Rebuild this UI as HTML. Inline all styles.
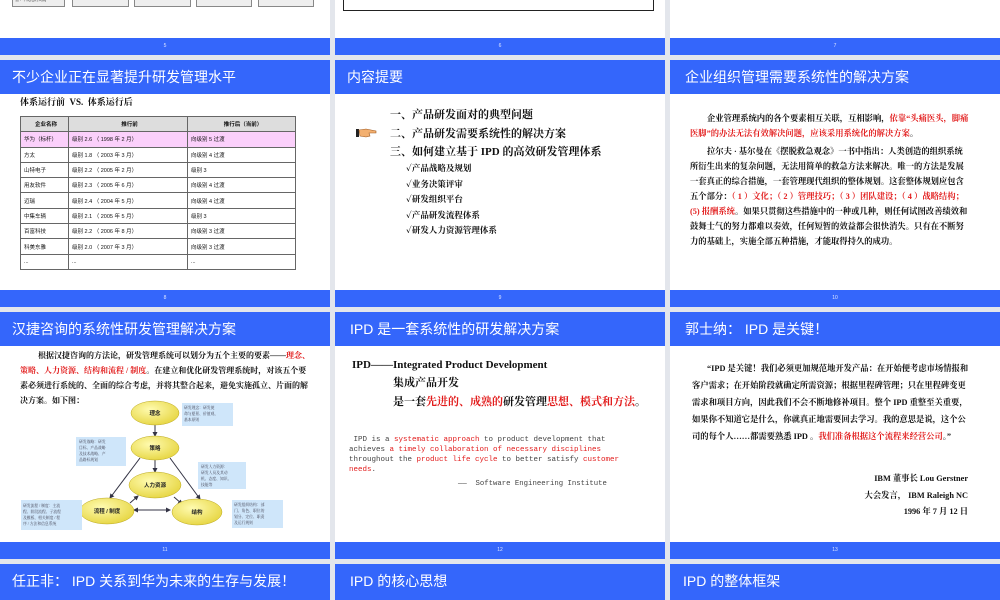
<!DOCTYPE html>
<html><head><meta charset="utf-8"><style>
*{margin:0;padding:0;box-sizing:border-box}
body{width:1000px;height:600px;background:#e3e6ec;position:relative;overflow:hidden;font-family:"Liberation Serif","Noto Serif CJK SC","Noto Sans CJK SC",serif;color:#111}
.a{position:absolute}
.w{position:absolute;background:#fff}
.b{position:absolute;background:#3466fb}
.h{position:absolute;background:#3466fb;color:#fff;font-family:"Liberation Sans","Noto Sans CJK SC",sans-serif;font-size:14px;line-height:34px;padding-left:12px;white-space:nowrap}
.n{color:#dfe6ff;font-family:"Liberation Sans",sans-serif;font-size:5px;text-align:center;line-height:16px}
.r{color:#e21b1b}
table{border-collapse:collapse;font-family:"Liberation Sans","Noto Sans CJK SC",sans-serif;font-size:5.5px}
td{border:1px solid #666;height:15.3px;padding-left:3px}
.p{font-size:8.6px;line-height:15px;font-family:"Liberation Serif","Noto Serif CJK SC",serif;font-weight:bold}
</style></head><body>
<!-- Row 1 -->
<div class="w" style="left:0;top:0;width:330px;height:38px"></div>
<div class="w" style="left:335px;top:0;width:330px;height:38px"></div>
<div class="w" style="left:670px;top:0;width:330px;height:38px"></div>
<div class="a" style="left:12px;top:-6px;width:53px;height:13px;border:1px solid #888;background:#eee;font-size:4px;line-height:5px;padding:2px">验 / 不规范的实践</div>
<div class="a" style="left:72px;top:-6px;width:57px;height:13px;border:1px solid #888;background:#eee"></div>
<div class="a" style="left:134px;top:-6px;width:57px;height:13px;border:1px solid #888;background:#eee"></div>
<div class="a" style="left:196px;top:-6px;width:56px;height:13px;border:1px solid #888;background:#eee"></div>
<div class="a" style="left:258px;top:-6px;width:56px;height:13px;border:1px solid #888;background:#eee"></div>
<div class="a" style="left:343px;top:-4px;width:311px;height:15px;border:1px solid #222;border-top:none"></div>
<div class="b n" style="left:0;top:38px;width:330px;height:17px">5</div>
<div class="b n" style="left:335px;top:38px;width:330px;height:17px">6</div>
<div class="b n" style="left:670px;top:38px;width:330px;height:17px">7</div>

<div class="h" style="left:0;top:60px;width:330px;height:34px">不少企业正在显著提升研发管理水平</div>
<div class="h" style="left:335px;top:60px;width:330px;height:34px">内容提要</div>
<div class="h" style="left:670px;top:60px;width:330px;height:34px;padding-left:15px">企业组织管理需要系统性的解决方案</div>
<div class="w" style="left:0;top:94px;width:330px;height:196px"></div>
<div class="w" style="left:335px;top:94px;width:330px;height:196px"></div>
<div class="w" style="left:670px;top:94px;width:330px;height:196px"></div>

<div class="a" style="left:20px;top:95px;font-size:9px;font-weight:bold">体系运行前&nbsp; VS.&nbsp; 体系运行后</div>
<table class="a" style="left:20px;top:116px;width:276px">
<tr style="background:#ddd;text-align:center;font-weight:bold"><td style="width:48px;height:14px">企业名称</td><td style="width:119px">推行前</td><td>推行后（当前）</td></tr>
<tr style="background:#fbd0fb"><td>华为（标杆）</td><td>级别 2.6 （ 1998 年 2 月）</td><td>向级别 5 过渡</td></tr>
<tr><td>方太</td><td>级别 1.8 （ 2003 年 3 月）</td><td>向级别 4 过渡</td></tr>
<tr><td>山特电子</td><td>级别 2.2 （ 2005 年 2 月）</td><td>级别 3</td></tr>
<tr><td>用友软件</td><td>级别 2.3 （ 2005 年 6 月）</td><td>向级别 4 过渡</td></tr>
<tr><td>迈瑞</td><td>级别 2.4 （ 2004 年 5 月）</td><td>向级别 4 过渡</td></tr>
<tr><td>中集车辆</td><td>级别 2.1 （ 2005 年 5 月）</td><td>级别 3</td></tr>
<tr><td>百富科技</td><td>级别 2.2 （ 2006 年 8 月）</td><td>向级别 3 过渡</td></tr>
<tr><td>科美东雅</td><td>级别 2.0 （ 2007 年 3 月）</td><td>向级别 3 过渡</td></tr>
<tr><td>...</td><td>...</td><td>...</td></tr>
</table>

<div class="a" style="left:390px;top:106px;font-size:11px;line-height:18.5px;font-weight:bold">一、产品研发面对的典型问题<br>二、产品研发需要系统性的解决方案<br>三、如何建立基于 IPD 的高效研发管理体系</div>
<div class="a" style="left:406px;top:161px;font-size:8.5px;line-height:15.5px;font-weight:bold">✓产品战略及规划<br>✓业务决策评审<br>✓研发组织平台<br>✓产品研发流程体系<br>✓研发人力资源管理体系</div>
<svg class="a" style="left:356px;top:127px" width="22" height="12" viewBox="0 0 22 12"><rect x="0" y="2" width="3" height="8" fill="#222"/><path d="M3 3 L10 2 L20 4 L20 6 L13 6 L14 9 L10 10 L4 9 Z" fill="#f3b070" stroke="#a05a20" stroke-width=".6"/></svg>

<div class="a p" style="left:690px;top:111px;width:280px;font-size:8.3px"><span style="padding-left:17px"></span>企业管理系统内的各个要素相互关联，互相影响，<span class="r">依靠“头痛医头，脚痛医脚”的办法无法有效解决问题，应该采用系统化的解决方案</span>。<div style="height:3px"></div><span style="padding-left:17px"></span>拉尔夫 · 基尔曼在《摆脱救急观念》一书中指出：人类创造的组织系统所衍生出来的复杂问题，无法用简单的救急方法来解决。唯一的方法是发展一套真正的综合措施，一套管理现代组织的整体规划。这套整体规划应包含五个部分：<span class="r">（ 1 ）文化；（ 2 ）管理技巧；（ 3 ）团队建设；（ 4 ）战略结构；(5) 报酬系统</span>。如果只贯彻这些措施中的一种或几种，则任何试图改善绩效和鼓舞士气的努力都难以奏效，任何短暂的效益都会很快消失。只有在不断努力的基础上，实施全部五种措施，才能取得持久的成功。</div>

<div class="b n" style="left:0;top:290px;width:330px;height:17px">8</div>
<div class="b n" style="left:335px;top:290px;width:330px;height:17px">9</div>
<div class="b n" style="left:670px;top:290px;width:330px;height:17px">10</div>

<!-- Row 2 -->
<div class="h" style="left:0;top:312px;width:330px;height:34px">汉捷咨询的系统性研发管理解决方案</div>
<div class="h" style="left:335px;top:312px;width:330px;height:34px;padding-left:15px">IPD 是一套系统性的研发解决方案</div>
<div class="h" style="left:670px;top:312px;width:330px;height:34px;padding-left:15px">郭士纳： IPD 是关键！</div>
<div class="w" style="left:0;top:346px;width:330px;height:196px"></div>
<div class="w" style="left:335px;top:346px;width:330px;height:196px"></div>
<div class="w" style="left:670px;top:346px;width:330px;height:196px"></div>

<div class="a p" style="left:20px;top:348px;width:294px;font-size:8px"><span style="padding-left:18px"></span>根据汉捷咨询的方法论，研发管理系统可以划分为五个主要的要素——<span class="r">理念、策略、人力资源、结构和流程 / 制度</span>。在建立和优化研发管理系统时，对该五个要素必须进行系统的、全面的综合考虑，并将其整合起来，避免实施孤立、片面的解决方案。如下图：</div>
<svg class="a" style="left:0;top:400px" width="330" height="140" viewBox="0 400 330 140">
<defs><radialGradient id="g" cx=".4" cy=".35" r=".7"><stop offset="0" stop-color="#fffbb0"/><stop offset="1" stop-color="#e6d540"/></radialGradient>
<marker id="m" markerWidth="5" markerHeight="5" refX="4" refY="2.5" orient="auto"><path d="M0 0L5 2.5L0 5Z" fill="#334"/></marker></defs>
<g stroke="#334" stroke-width="1" marker-end="url(#m)" fill="none">
<line x1="155" y1="425" x2="155" y2="436"/><line x1="155" y1="460" x2="155" y2="472"/>
<line x1="140" y1="458" x2="110" y2="498"/><line x1="170" y1="458" x2="200" y2="499"/>
<line x1="135" y1="510" x2="170" y2="510"/><line x1="170" y1="510" x2="134" y2="510"/>
<line x1="130" y1="503" x2="138" y2="496"/><line x1="174" y1="497" x2="182" y2="504"/>
</g>
<g fill="url(#g)" stroke="#bba820" stroke-width=".5">
<ellipse cx="155" cy="413" rx="24" ry="12"/><ellipse cx="155" cy="448" rx="24" ry="12"/><ellipse cx="155" cy="485" rx="26" ry="13"/><ellipse cx="107" cy="511" rx="27" ry="13"/><ellipse cx="197" cy="512" rx="25" ry="13"/></g>
<g font-size="5.5" font-weight="bold" text-anchor="middle" fill="#222" font-family="Liberation Sans,Noto Sans CJK SC,sans-serif">
<text x="155" y="415">理念</text><text x="155" y="450">策略</text><text x="155" y="487">人力资源</text><text x="107" y="513">流程 / 制度</text><text x="197" y="514">结构</text></g>
<g fill="#cfe6fa"><rect x="182" y="403" width="51" height="23"/><rect x="76" y="437" width="50" height="29"/><rect x="198" y="462" width="48" height="27"/><rect x="21" y="500" width="61" height="30"/><rect x="232" y="500" width="51" height="28"/></g>
<g font-size="3.8" fill="#445" font-family="Liberation Serif,Noto Serif CJK SC,serif">
<text x="184" y="409">研发理念：研发使</text><text x="184" y="415">命与愿景、价值观、</text><text x="184" y="421">基本原则</text>
<text x="79" y="443">研发战略：研发</text><text x="79" y="449">目标、产品战略</text><text x="79" y="455">及技术战略、产</text><text x="79" y="461">品路标规划</text>
<text x="201" y="468">研发人力资源：</text><text x="201" y="474">研发人员及其动</text><text x="201" y="480">机、态度、知识、</text><text x="201" y="486">技能等</text>
<text x="23" y="507">研发流程 / 制度：主流</text><text x="23" y="513">程、阶段流程、子流程</text><text x="23" y="519">及模板、相关制度 / 程</text><text x="23" y="525">序 / 方法和信息系统</text>
<text x="234" y="506">研发组织结构：部</text><text x="234" y="512">门、角色、职位的</text><text x="234" y="518">划分、定位、职责</text><text x="234" y="524">及运行规则</text></g>
</svg>

<div class="a" style="left:352px;top:357px;font-size:11px;line-height:17px;font-weight:bold">IPD——Integrated Product Development</div>
<div class="a" style="left:393px;top:374px;font-size:11px;line-height:19px;font-weight:bold">集成产品开发<br>是一套<span class="r">先进的、成熟的</span>研发管理<span class="r">思想、模式和方法</span>。</div>
<div class="a" style="left:349px;top:435px;width:282px;font-family:'Liberation Mono',monospace;font-size:7.5px;line-height:10px;color:#444">&nbsp;IPD is a <span class="r">systematic approach</span> to product development that achieves <span class="r">a timely collaboration of necessary disciplines</span> throughout the <span class="r">product life cycle</span> to better satisfy <span class="r">customer needs</span>.</div>
<div class="a" style="left:458px;top:480px;font-family:'Liberation Mono',monospace;font-size:7.3px;color:#444">——&nbsp; Software Engineering Institute</div>

<div class="a p" style="left:692px;top:360px;width:278px;font-size:8.3px;line-height:17px"><span style="padding-left:15px"></span>“IPD 是关键！我们必须更加规范地开发产品：在开始便考虑市场情报和客户需求；在开始阶段就确定所需资源；根据里程碑管理；只在里程碑变更需求和项目方向，因此我们不会不断地修补项目。整个 IPD 重整至关重要，如果你不知道它是什么，你就真正地需要回去学习。我的意思是说，这个公司的每个人……都需要熟悉 IPD 。<span class="r">我们准备根据这个流程来经营公司</span>。”</div>
<div class="a p" style="left:780px;top:471px;width:188px;text-align:right;font-size:8.3px;line-height:16.5px">IBM 董事长 Lou Gerstner<br>大会发言， IBM Raleigh NC<br>1996 年 7 月 12 日</div>

<div class="b n" style="left:0;top:542px;width:330px;height:17px">11</div>
<div class="b n" style="left:335px;top:542px;width:330px;height:17px">12</div>
<div class="b n" style="left:670px;top:542px;width:330px;height:17px">13</div>

<div class="h" style="left:0;top:564px;width:330px;height:36px">任正非： IPD 关系到华为未来的生存与发展！</div>
<div class="h" style="left:335px;top:564px;width:330px;height:36px;padding-left:15px">IPD 的核心思想</div>
<div class="h" style="left:670px;top:564px;width:330px;height:36px;padding-left:13px">IPD 的整体框架</div>
</body></html>
